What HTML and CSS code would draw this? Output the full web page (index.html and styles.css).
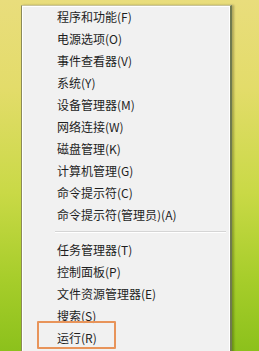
FILE: index.html
```html
<!DOCTYPE html>
<html lang="zh-CN">
<head>
  <meta charset="UTF-8" />
  <title>Win+X 菜单</title>
  <link rel="stylesheet" href="styles.css">
</head>
<body>
  <div class="desk">
    <div class="menu">
      <ul class="group">
        <li>程序和功能(F)</li>
        <li>电源选项(O)</li>
        <li>事件查看器(V)</li>
        <li>系统(Y)</li>
        <li>设备管理器(M)</li>
        <li>网络连接(W)</li>
        <li>磁盘管理(K)</li>
        <li>计算机管理(G)</li>
        <li>命令提示符(C)</li>
        <li>命令提示符(管理员)(A)</li>
      </ul>
      <div class="sep"></div>
      <ul class="group">
        <li>任务管理器(T)</li>
        <li>控制面板(P)</li>
        <li>文件资源管理器(E)</li>
        <li>搜索(S)</li>
        <li>运行(R)</li>
      </ul>
      <!-- 标注框 -->
      <div class="mark"></div>
    </div>
  </div>
</body>
</html>
```

FILE: styles.css
```css
* {
  margin: 0;
  padding: 0;
  box-sizing: border-box;
}
html, body {
  width: 100%;
  height: 100%;
  overflow: hidden;
}
body {
  font-family: "Noto Sans CJK SC", "Noto Sans", sans-serif;
  background: linear-gradient(to bottom, #e9dd7c 0%, #e3dc6a 25%, #c9d946 55%, #a6cd2a 80%, #8cc11c 100%);
}
.desk {
  height: 100%;
  padding: 5px 27px 0 21px;
}
.menu {
  position: relative;
  height: 360px;
  background-color: #f1f1f1;
  border-left: 1px solid #8a8a5a;
  border-top: 1px solid #c9c49a;
  border-right: 2px solid #6f7a50;
  box-shadow: inset 1px 1px 0 #ffffff, inset -1px 0 0 #ffffff, 2px 0 2px rgba(0, 0, 0, 0.25);
}
.group {
  list-style: none;
}
.group li {
  height: 22px;
  line-height: 22px;
  padding-left: 35px;
  font-size: 12px;
  color: #1e1e1e;
  white-space: nowrap;
}
.sep {
  height: 2px;
  margin: 5px 4px 6px 33px;
  border-top: 1px solid #d5d5d5;
  border-bottom: 1px solid #ffffff;
}
.mark {
  position: absolute;
  left: 15px;
  top: 315px;
  width: 79px;
  height: 28px;
  border: 2px solid #e8945a;
  border-radius: 1px;
}
```
